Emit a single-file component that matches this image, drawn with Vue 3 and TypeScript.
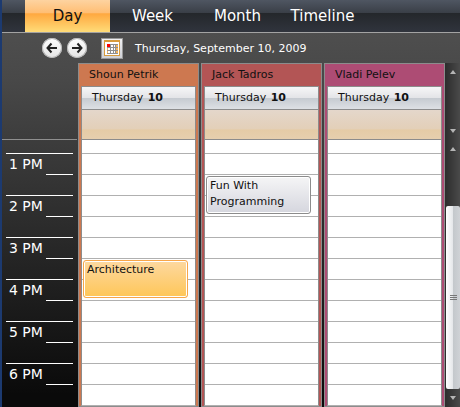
<script setup lang="ts">
import { ref } from 'vue'

interface Appointment {
  title: string
  slot: number
  span: number
  tone: 'amber' | 'silver'
}

interface Resource {
  name: string
  theme: string
  appointments: Appointment[]
}

const SLOT_HEIGHT = 21

const views: string[] = ['Day', 'Week', 'Month', 'Timeline']
const activeView = ref<string>('Day')

const hours: string[] = ['1 PM', '2 PM', '3 PM', '4 PM', '5 PM', '6 PM']
const slotCount = hours.length * 2

const resources: Resource[] = [
  {
    name: 'Shoun Petrik',
    theme: 'copper',
    appointments: [{ title: 'Architecture', slot: 5, span: 2, tone: 'amber' }],
  },
  {
    name: 'Jack Tadros',
    theme: 'brick',
    appointments: [{ title: 'Fun With Programming', slot: 1, span: 2, tone: 'silver' }],
  },
  { name: 'Vladi Pelev', theme: 'plum', appointments: [] },
]

function placement(item: Appointment): Record<string, string> {
  return {
    top: `${item.slot * SLOT_HEIGHT + 15}px`,
    height: `${item.span * SLOT_HEIGHT - 4}px`,
  }
}
</script>

<template>
  <main class="scheduler">
    <nav class="views">
      <button
        v-for="view in views"
        :key="view"
        type="button"
        class="view"
        :class="{ active: view === activeView }"
        @click="activeView = view"
      >
        {{ view }}
      </button>
    </nav>

    <header class="toolbar">
      <button type="button" class="round" aria-label="Previous day">
        <svg viewBox="0 0 20 20" width="20" height="20">
          <path d="M15 10H6M9.500 5.500L5.500 10l4 4.500" />
        </svg>
      </button>
      <button type="button" class="round" aria-label="Next day">
        <svg viewBox="0 0 20 20" width="20" height="20">
          <path d="M5 10h9M10.500 5.500l4 4.500-4 4.500" />
        </svg>
      </button>
      <button type="button" class="picker" aria-label="Choose date">
        <svg viewBox="0 0 16 16" width="16" height="16" shape-rendering="crispEdges">
          <rect width="16" height="16" fill="#d79b3c" />
          <rect x="1" y="2" width="14" height="13" fill="#fff" />
          <rect x="3" y="4" width="11" height="10" fill="#8f8f8f" />
          <path
            fill="#fff"
            d="M7 5h2v2H7zM10 5h1v2h-1zM4 8h2v2H4zM7 8h2v2H7zM10 8h1v2h-1zM4 11h2v2H4zM7 11h2v2H7zM10 11h1v2h-1z"
          />
          <path fill="#f4b45c" d="M12 5h2v2h-2zM12 8h2v2h-2zM12 11h2v2h-2zM3 8h1v2H3zM3 11h1v2H3z" />
          <rect x="3" y="4" width="3" height="3" fill="#f00" />
        </svg>
      </button>
      <time class="date" datetime="2009-09-10">Thursday, September 10, 2009</time>
    </header>

    <div class="board">
      <aside class="ruler">
        <div class="ruler-head"></div>
        <div v-for="hour in hours" :key="hour" class="hour">
          <span class="label">{{ hour }}</span>
          <span class="half"></span>
        </div>
      </aside>

      <div class="resources">
        <section v-for="person in resources" :key="person.name" class="resource" :class="person.theme">
          <h2 class="name">{{ person.name }}</h2>
          <div class="day">
            <div class="day-head">Thursday <b>10</b></div>
            <div class="all-day"></div>
            <div class="slots">
              <div class="slot partial"></div>
              <div v-for="n in slotCount" :key="n" class="slot"></div>
              <article
                v-for="item in person.appointments"
                :key="item.title"
                class="appointment"
                :class="item.tone"
                :style="placement(item)"
              >
                {{ item.title }}
              </article>
            </div>
          </div>
        </section>
      </div>

      <div class="rails">
        <div class="rail head-rail">
          <button type="button" class="arrow" aria-label="Scroll all-day area up"><i class="up"></i></button>
          <button type="button" class="arrow" aria-label="Scroll all-day area down"><i class="down"></i></button>
        </div>
        <div class="rail body-rail">
          <button type="button" class="arrow" aria-label="Scroll hours up"><i class="up"></i></button>
          <div class="thumb"><i class="grip"></i></div>
          <button type="button" class="arrow" aria-label="Scroll hours down"><i class="down"></i></button>
        </div>
      </div>
    </div>
  </main>
</template>

<style>
body {
  margin: 0;
  background: #0a0a0a;
}
</style>

<style scoped>
.scheduler {
  box-sizing: border-box;
  min-height: 100vh;
  border-left: 2px solid #1c3a70;
  background: linear-gradient(#525252, #484848 20%, #303030 50%, #0a0a0a 97%);
  font-family: Verdana, 'DejaVu Sans', sans-serif;
  font-size: 11px;
  color: #fff;
}

button {
  margin: 0;
  padding: 0;
  border: 0;
  background: none;
  font: inherit;
  color: inherit;
}

.views {
  display: flex;
  height: 32px;
  padding-left: 23px;
  border-bottom: 1px solid #a3a3a3;
  background: linear-gradient(#4f5662, #3a3f47 40%, #24272b 41%, #30343d);
}

.view {
  width: 85px;
  font-size: 15px;
  line-height: 32px;
  text-align: center;
}

.view.active {
  background: linear-gradient(#fdd3a0, #ffbe74 40%, #ffa840 43%, #ffdc78);
  color: #111;
}

.toolbar {
  display: flex;
  align-items: center;
  height: 30px;
  padding-left: 40px;
}

.round {
  width: 20px;
  height: 20px;
  margin-right: 5px;
  border-radius: 50%;
  background: linear-gradient(#fff, #e4e4e4);
  box-shadow: inset 0 0 0 1px #b5b5b5;
}

.round svg {
  display: block;
  fill: none;
  stroke: #222;
  stroke-width: 2;
}

.picker {
  display: grid;
  place-items: center;
  box-sizing: border-box;
  width: 22px;
  height: 21px;
  margin: 0 12px 0 9px;
  border: 1px solid #999;
  background: linear-gradient(#f0f0f2, #cfd1d6);
}

.board {
  display: grid;
  grid-template-columns: 76px 1fr 15px;
}

.ruler-head {
  height: 76px;
  margin-right: 1px;
  margin-bottom: 13px;
  border-bottom: 1px solid #8f8f8f;
}

.hour {
  display: flex;
  justify-content: space-between;
  box-sizing: border-box;
  height: 42px;
  margin: 0 5px 0 4px;
  padding-left: 3px;
  border-top: 1px solid #fff;
}

.label {
  font-size: 14px;
  line-height: 21px;
}

.half {
  width: 27px;
  height: 20px;
  border-bottom: 1px solid #fff;
}

.resources {
  display: grid;
  grid-template-columns: repeat(3, 1fr);
  gap: 2px;
}

.resource {
  padding: 0 2px;
  border: 1px solid #8c8c8c;
}

.copper {
  background: #cd7850;
}

.brick {
  background: #b35555;
}

.plum {
  background: #ad4c74;
}

.name {
  margin: 0;
  padding-left: 8px;
  font-size: 11px;
  font-weight: 400;
  line-height: 22px;
  color: #111;
}

.day {
  border: 1px solid #8c8c8c;
  border-bottom-color: #b0b0b0;
  color: #111;
}

.day-head {
  padding-left: 10px;
  border-bottom: 1px solid #8c8c8c;
  background: linear-gradient(#f6f6f7, #e3e4e7 50%, #c6cbd1 52%, #dde0e4);
  line-height: 22px;
}

.day-head b {
  margin-left: 1px;
}

.all-day {
  height: 29px;
  border-bottom: 1px solid #8c8c8c;
  background: linear-gradient(#e4d7cb, #e3cfb8 66%, #e5cba6 68%, #e6cfae);
}

.slots {
  position: relative;
  background: #fff;
}

.slot {
  height: 20px;
  border-bottom: 1px solid #b0b0b0;
}

.slot.partial {
  height: 13px;
}

.slot:nth-child(13) {
  border-bottom: 0;
}

.appointment {
  position: absolute;
  left: 1px;
  right: 7px;
  box-sizing: border-box;
  padding: 1px 3px;
  border: 1px solid;
  border-radius: 3px;
  box-shadow: inset 0 0 0 1px #fff;
  line-height: 16px;
}

.amber {
  border-color: #f7a64a;
  background: linear-gradient(#fdd8a0, #fec658);
}

.silver {
  border-color: #8c8c8c;
  background: linear-gradient(#f5f5f6, #d5d6de);
}

.rails {
  display: flex;
  flex-direction: column;
}

.rail {
  display: flex;
  flex-direction: column;
  justify-content: space-between;
  background: linear-gradient(90deg, #2c2c2c, #4a4a4a);
}

.head-rail {
  height: 77px;
}

.body-rail {
  flex: 1;
}

.arrow {
  display: grid;
  place-items: center;
  width: 15px;
  height: 18px;
}

.up,
.down {
  border: 3px solid transparent;
}

.up {
  border-top-width: 0;
  border-bottom: 4px solid #b5b5b5;
}

.down {
  border-bottom-width: 0;
  border-top: 4px solid #b5b5b5;
}

.thumb {
  display: grid;
  flex: 1;
  place-items: center;
  margin: 48px 0 0 1px;
  border-radius: 2px;
  background: linear-gradient(90deg, #fff, #e4e6e9 50%, #c4c8cc 52%, #cfd2d6);
}

.grip {
  width: 7px;
  height: 1px;
  border: solid #777;
  border-width: 1px 0;
  background: #777;
  background-clip: content-box;
  padding: 1px 0;
}
</style>
